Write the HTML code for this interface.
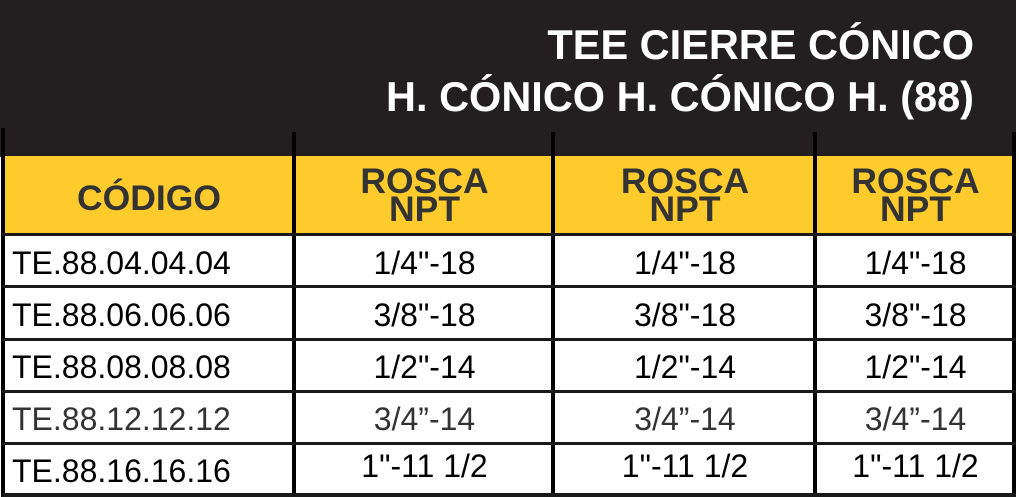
<!DOCTYPE html>
<html><head><meta charset="utf-8"><style>
*{margin:0;padding:0;box-sizing:border-box}
body{width:1019px;height:497px;background:#fff;position:relative;overflow:hidden;font-family:"Liberation Sans",Arial,sans-serif}
.dark{position:absolute;left:0;top:0;width:1016px;height:157px;background:#231f20}
.t{position:absolute;right:45px;color:#fff;font-weight:bold;font-size:41.5px;white-space:nowrap;line-height:1}
.yel{position:absolute;left:3px;top:156px;width:1013px;height:78px;background:#fdcb2c}
.v{position:absolute;width:4px;background:#000}
.h{position:absolute;left:2px;width:1014px;height:3px;background:#1a1a1a}
.c{position:absolute;font-size:32px;color:#000;white-space:nowrap;line-height:1}
.hd{position:absolute;font-weight:bold;color:#333;font-size:35.5px;text-align:center;line-height:28px}
</style></head><body>
<div class="dark"></div>
<div class="t" style="top:24px">TEE CIERRE CÓNICO</div>
<div class="t" style="top:76px">H. CÓNICO H. CÓNICO H. (88)</div>
<div class="yel"></div>
<div class="v" style="left:1px;top:128px;height:369px"></div>
<div class="v" style="left:292px;top:132px;height:365px"></div>
<div class="v" style="left:551px;top:132px;height:365px"></div>
<div class="v" style="left:813px;top:132px;height:365px"></div>
<div class="v" style="left:1012px;top:132px;height:365px"></div>
<div class="h" style="top:233px"></div>
<div class="h" style="top:285px"></div>
<div class="h" style="top:338px"></div>
<div class="h" style="top:390px"></div>
<div class="h" style="top:442px"></div>
<div class="h" style="top:493px;height:4px"></div>
<div class="hd" style="left:4px;width:290px;top:184px">CÓDIGO</div>
<div class="hd" style="left:296px;width:257px;top:167px">ROSCA<br>NPT</div>
<div class="hd" style="left:555px;width:260px;top:167px">ROSCA<br>NPT</div>
<div class="hd" style="left:817px;width:197px;top:167px">ROSCA<br>NPT</div>
<div class="c" style="left:12px;top:247px">TE.88.04.04.04</div>
<div class="c" style="left:12px;top:299px">TE.88.06.06.06</div>
<div class="c" style="left:12px;top:351px">TE.88.08.08.08</div>
<div class="c" style="left:12px;top:403px;color:#333">TE.88.12.12.12</div>
<div class="c" style="left:12px;top:455px">TE.88.16.16.16</div>
<div class="c" style="left:296px;width:257px;text-align:center;top:247px">1/4"-18</div>
<div class="c" style="left:296px;width:257px;text-align:center;top:299px">3/8"-18</div>
<div class="c" style="left:296px;width:257px;text-align:center;top:351px">1/2"-14</div>
<div class="c" style="left:296px;width:257px;text-align:center;top:403px;color:#333">3/4”-14</div>
<div class="c" style="left:296px;width:257px;text-align:center;top:450px">1"-11 1/2</div>
<div class="c" style="left:555px;width:260px;text-align:center;top:247px">1/4"-18</div>
<div class="c" style="left:555px;width:260px;text-align:center;top:299px">3/8"-18</div>
<div class="c" style="left:555px;width:260px;text-align:center;top:351px">1/2"-14</div>
<div class="c" style="left:555px;width:260px;text-align:center;top:403px;color:#333">3/4”-14</div>
<div class="c" style="left:555px;width:260px;text-align:center;top:450px">1"-11 1/2</div>
<div class="c" style="left:817px;width:197px;text-align:center;top:247px">1/4"-18</div>
<div class="c" style="left:817px;width:197px;text-align:center;top:299px">3/8"-18</div>
<div class="c" style="left:817px;width:197px;text-align:center;top:351px">1/2"-14</div>
<div class="c" style="left:817px;width:197px;text-align:center;top:403px;color:#333">3/4”-14</div>
<div class="c" style="left:817px;width:197px;text-align:center;top:450px">1"-11 1/2</div>
</body></html>
